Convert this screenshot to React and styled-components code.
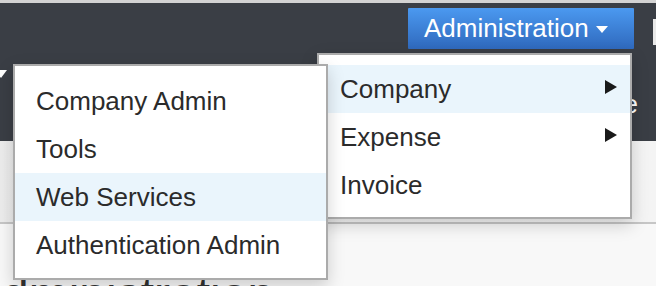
import React from "react";
import styled, { createGlobalStyle } from "styled-components";

const Global = createGlobalStyle`
  html, body { margin: 0; padding: 0; background: #f8f8f8; }
  body { font-family: "Liberation Sans", Arial, Helvetica, sans-serif; }
`;

const Page = styled.div`
  position: relative;
  width: 656px;
  height: 286px;
  overflow: hidden;
  background: #f8f8f8;
`;

const TopStrip = styled.div`
  height: 3px;
  background: #d3d3d3;
`;

const Header = styled.header`
  height: 138px;
  background: #3a3e45;
  display: flex;
  flex-direction: column;
`;

const TopBar = styled.div`
  display: flex;
  justify-content: flex-end;
  align-items: flex-start;
  padding-top: 5px;
  height: 46px;
  box-sizing: border-box;
`;

const AdminButton = styled.button`
  display: flex;
  align-items: center;
  height: 41px;
  width: 226px;
  margin: 0 19px 0 0;
  padding: 0 0 0 16px;
  border: none;
  border-radius: 1px;
  background: linear-gradient(#4b99f0, #2f69bd);
  color: #fff;
  font-family: inherit;
  font-size: 26px;
  line-height: 41px;
  box-sizing: border-box;
`;

const Caret = styled.span`
  display: inline-block;
  margin-left: 7px;
  margin-top: 1px;
  width: 0;
  height: 0;
  border-left: 6px solid transparent;
  border-right: 6px solid transparent;
  border-top: 7px solid #fff;
`;

const EdgeBar = styled.div`
  width: 3px;
  height: 26px;
  margin-top: 11px;
  background: #e9e9e9;
`;

const NavRow = styled.div`
  display: flex;
  align-items: center;
  justify-content: ${(p) => (p.$end ? "flex-end" : "flex-start")};
  height: 29px;
  padding-right: ${(p) => (p.$end ? "18px" : "0")};
  margin-left: ${(p) => (p.$end ? "0" : "-5px")};
  margin-top: ${(p) => (p.$end ? "0" : "12px")};
  gap: 22px;
  color: #fff;
  font-size: 26px;
  line-height: 29px;
  white-space: nowrap;
`;

const NavCaret = styled.span`
  display: inline-block;
  width: 0;
  height: 0;
  border-left: 6px solid transparent;
  border-right: 6px solid transparent;
  border-top: 8px solid #fff;
  margin-top: -4px;
`;

const SubBar = styled.div`
  height: 81px;
  background: linear-gradient(90deg, #ececec, #f6f6f6 40%, #f4f4f4);
  border-bottom: 2px solid #c6c6c6;
`;

const Heading = styled.h1`
  margin: 46px 0 0 -30px;
  font-weight: normal;
  font-size: 48px;
  line-height: 50px;
  color: #333;
  white-space: nowrap;
`;

const Menu = styled.ul`
  position: absolute;
  left: ${(p) => p.$left}px;
  top: ${(p) => p.$top}px;
  width: 315px;
  margin: 0;
  padding: ${(p) => p.$pad};
  list-style: none;
  background: #fff;
  border: 2px solid #ababab;
  box-sizing: border-box;
  box-shadow: 0 6px 16px rgba(0, 0, 0, 0.18);
  z-index: ${(p) => p.$z};
`;

const Item = styled.li`
  display: flex;
  align-items: center;
  justify-content: space-between;
  height: 48px;
  padding: 0 13px 0 ${(p) => p.$indent}px;
  background: ${(p) => (p.$active ? "#eaf5fc" : "transparent")};
  color: #2b2b2b;
  font-size: 26px;
  white-space: nowrap;
`;

const SubArrow = styled.span`
  width: 0;
  height: 0;
  border-top: 7px solid transparent;
  border-bottom: 7px solid transparent;
  border-left: 12px solid #1a1a1a;
  margin-top: -4px;
`;

export default function App() {
  return (
    <>
      <Global />
      <Page>
        <TopStrip />
        <Header>
          <TopBar>
            <AdminButton>
              Administration
              <Caret />
            </AdminButton>
            <EdgeBar />
          </TopBar>
          <NavRow>
            <NavCaret />
            <span>Analytics Center</span>
          </NavRow>
          <NavRow $end>
            <span>Invoice</span>
          </NavRow>
        </Header>
        <SubBar />
        <Heading>Administration</Heading>

        <Menu $left={317} $top={53} $pad="10px 0 8px" $z={1}>
          <Item $indent={21} $active>
            Company
            <SubArrow />
          </Item>
          <Item $indent={21}>
            Expense
            <SubArrow />
          </Item>
          <Item $indent={21}>Invoice</Item>
        </Menu>

        <Menu $left={13} $top={64} $pad="11px 0 9px" $z={2}>
          <Item $indent={21}>Company Admin</Item>
          <Item $indent={21}>Tools</Item>
          <Item $indent={21} $active>
            Web Services
          </Item>
          <Item $indent={21}>Authentication Admin</Item>
        </Menu>
      </Page>
    </>
  );
}
